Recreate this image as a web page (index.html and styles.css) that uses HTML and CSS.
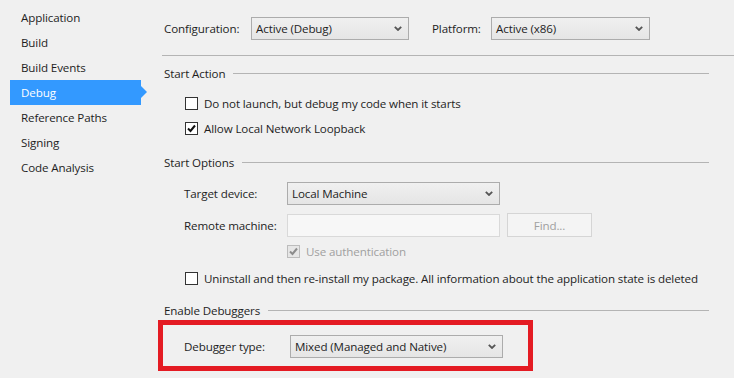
FILE: index.html
```html
<!DOCTYPE html>
<html lang="en">
<head>
  <meta charset="UTF-8">
  <title>Project Properties - Debug</title>
  <link rel="stylesheet" href="styles.css">
</head>
<body>
  <div class="window">
    <!-- Left: property pages -->
    <ul class="nav">
      <li>Application</li>
      <li>Build</li>
      <li>Build Events</li>
      <li class="active">Debug</li>
      <li>Reference Paths</li>
      <li>Signing</li>
      <li>Code Analysis</li>
    </ul>

    <!-- Right: debug page -->
    <div class="page">
      <div class="config-row">
        <span class="config-label">Configuration:</span>
        <div class="combo combo-config"><span>Active (Debug)</span><svg class="chev" width="8" height="5" viewBox="0 0 8 5"><path d="M0.8 0.8 L4 4 L7.2 0.8" fill="none" stroke="#555" stroke-width="1.8"/></svg></div>
        <span class="config-label platform">Platform:</span>
        <div class="combo combo-platform"><span>Active (x86)</span><svg class="chev" width="8" height="5" viewBox="0 0 8 5"><path d="M0.8 0.8 L4 4 L7.2 0.8" fill="none" stroke="#555" stroke-width="1.8"/></svg></div>
      </div>
      <div class="rule"></div>

      <div class="group-title first"><span>Start Action</span></div>
      <div class="check-row">
        <span class="box"></span>
        <span>Do not launch, but debug my code when it starts</span>
      </div>
      <div class="check-row">
        <span class="box"><svg width="11" height="11" viewBox="0 0 11 11"><path d="M2 5.5 L4.5 8 L9 2.5" fill="none" stroke="#111" stroke-width="2"/></svg></span>
        <span>Allow Local Network Loopback</span>
      </div>

      <div class="group-title"><span>Start Options</span></div>
      <div class="field-row target">
        <span class="field-label">Target device:</span>
        <div class="combo combo-wide"><span>Local Machine</span><svg class="chev" width="8" height="5" viewBox="0 0 8 5"><path d="M0.8 0.8 L4 4 L7.2 0.8" fill="none" stroke="#555" stroke-width="1.8"/></svg></div>
      </div>
      <div class="field-row remote">
        <span class="field-label">Remote machine:</span>
        <div class="textbox"></div>
        <div class="button disabled">Find...</div>
      </div>
      <div class="check-row auth">
        <span class="box disabled"><svg width="11" height="11" viewBox="0 0 11 11"><path d="M2 5.5 L4.5 8 L9 2.5" fill="none" stroke="#8c8c8c" stroke-width="2"/></svg></span>
        <span class="muted">Use authentication</span>
      </div>
      <div class="check-row uninstall">
        <span class="box"></span>
        <span>Uninstall and then re-install my package. All information about the application state is deleted</span>
      </div>

      <div class="group-title debuggers"><span>Enable Debuggers</span></div>
      <div class="highlight">
        <span class="field-label wide">Debugger type:</span>
        <div class="combo combo-wide"><span>Mixed (Managed and Native)</span><svg class="chev" width="8" height="5" viewBox="0 0 8 5"><path d="M0.8 0.8 L4 4 L7.2 0.8" fill="none" stroke="#555" stroke-width="1.8"/></svg></div>
      </div>
    </div>
  </div>
</body>
</html>
```

FILE: styles.css
```css
* {
  margin: 0;
  padding: 0;
  box-sizing: border-box;
}
body {
  background: #f0f0f0;
  font-family: 'Open Sans', 'Noto Sans', sans-serif;
  font-size: 11.6px;
  letter-spacing: -0.12px;
  color: #1e1e1e;
  width: 734px;
  height: 378px;
  overflow: hidden;
}
.window {
  display: flex;
}

/* sidebar */
.nav {
  list-style: none;
  width: 162px;
  padding-top: 5px;
  padding-left: 10px;
  flex-shrink: 0;
}
.nav li {
  height: 25px;
  line-height: 25px;
  width: 131px;
  padding-left: 11px;
  position: relative;
}
.nav li.active {
  background: #3399ff;
  color: #fff;
}
.nav li.active::after {
  content: '';
  position: absolute;
  right: -6px;
  top: 6px;
  border-left: 6px solid #3399ff;
  border-top: 6px solid transparent;
  border-bottom: 6px solid transparent;
}

/* page */
.page {
  flex: 1;
  padding-top: 17px;
}
.config-row {
  display: flex;
  align-items: center;
  height: 23px;
  padding-left: 2px;
}
.config-label {
  width: 87px;
}
.config-label.platform {
  width: 59px;
  margin-left: 23px;
}
.combo {
  height: 23px;
  border: 1px solid #acacac;
  background: linear-gradient(#f0f0f0, #e5e5e5);
  display: flex;
  align-items: center;
  justify-content: space-between;
  padding: 0 6px 0 4px;
}
.combo-config {
  width: 158px;
}
.combo-platform {
  width: 159px;
}
.combo-wide {
  width: 213px;
}
.rule {
  height: 1px;
  background: #b4b4b4;
  margin-top: 15px;
}
.group-title {
  display: flex;
  align-items: center;
  height: 18px;
  margin-top: 12px;
  padding-left: 2px;
  margin-right: 25px;
}
.group-title.first {
  margin-top: 8px;
}
.group-title::after {
  content: '';
  flex: 1;
  height: 1px;
  background: #b4b4b4;
  margin-left: 8px;
}
.check-row {
  display: flex;
  align-items: center;
  height: 25px;
  padding-left: 23px;
}
.group-title.first + .check-row {
  margin-top: 9px;
}
.box {
  width: 13px;
  height: 13px;
  border: 1px solid #333;
  background: #fff;
  margin-right: 6px;
  display: flex;
  align-items: center;
  justify-content: center;
}
.box.disabled {
  border-color: #bcbcbc;
  background: #e6e6e6;
}
.muted {
  color: #a0a0a0;
}
.field-row {
  display: flex;
  align-items: center;
  padding-left: 22px;
}
.field-row.target {
  margin-top: 11px;
}
.field-row.remote {
  margin-top: 8px;
}
.field-label {
  width: 103px;
}
.field-label.wide {
  width: 106px;
}
.textbox {
  width: 213px;
  height: 23px;
  border: 1px solid #d9d9d9;
  background: #f7f7f7;
}
.button {
  width: 85px;
  height: 24px;
  margin-left: 7px;
  border: 1px solid #d5d5d5;
  background: #f4f4f4;
  display: flex;
  align-items: center;
  justify-content: center;
}
.button.disabled {
  color: #a0a0a0;
}
.check-row.auth {
  height: 20px;
  margin-top: 4px;
  padding-left: 125px;
}
.check-row.uninstall {
  height: 20px;
  margin-top: 7px;
}
.group-title.debuggers {
  margin-top: 13px;
}
.highlight {
  display: flex;
  align-items: center;
  width: 375px;
  height: 51px;
  margin-left: -4px;
  margin-top: 1px;
  border: 5px solid #e41b23;
  padding-left: 21px;
  padding-top: 2px;
}
```
